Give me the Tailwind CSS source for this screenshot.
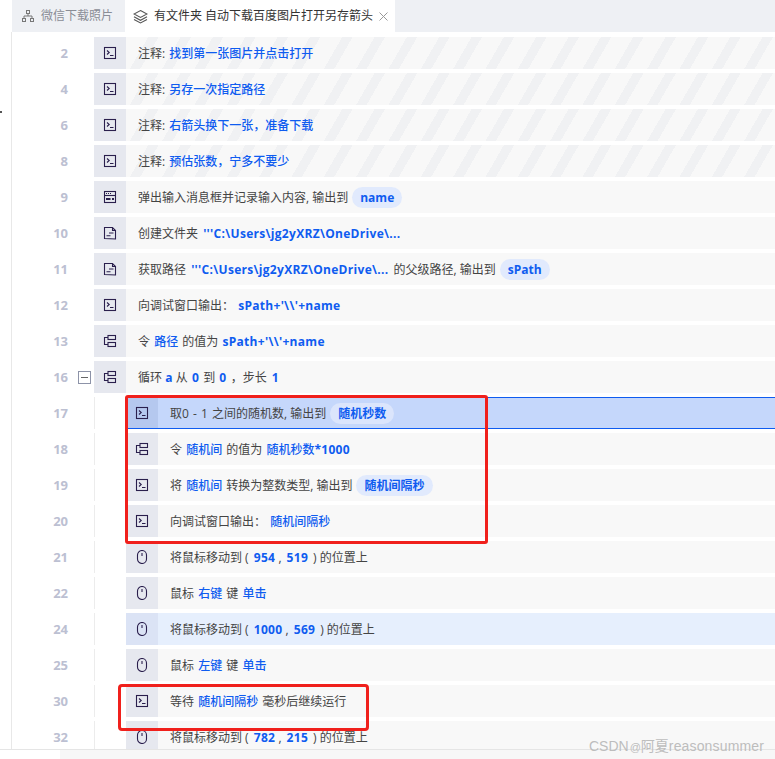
<!DOCTYPE html>
<html lang="zh">
<head>
    <meta charset="UTF-8">
    <title>流程编辑</title>
    <script src="https://cdn.jsdelivr.net/npm/@tailwindcss/browser@4"></script>
</head>
<body class="bg-white">
    <svg class="hidden">
        <symbol id="i-term" viewBox="0 0 14 14" fill="none" stroke="#2a1f4d" stroke-width="1.1"><rect x="1.5" y="1.5" width="11" height="11"/><path d="M4 4.5 6.2 6.5 4 8.5M7 9.5h3.5"/></symbol>
        <symbol id="i-input" viewBox="0 0 14 14" fill="none" stroke="#2a1f4d" stroke-width="1.1"><rect x="1.5" y="1.5" width="11" height="11"/><path d="M1.5 5.5h11"/><path d="M3 3.5h5" stroke-dasharray="1 1"/><path d="M3 9h4.5M9 9h2" stroke-width="1.8"/></symbol>
        <symbol id="i-file" viewBox="0 0 14 14" fill="none" stroke="#2a1f4d" stroke-width="1.1"><path d="M1.5 12.5v-11h8l3 3v8.5zM9.5 1.5v3h3M6 7h4.5M3.5 9.8h4"/></symbol>
        <symbol id="i-var" viewBox="0 0 14 14" fill="none" stroke="#2a1f4d" stroke-width="1.1"><rect x="5" y="1.5" width="7.5" height="4"/><rect x="5" y="8.5" width="7.5" height="4"/><path d="M5 3.5H1.5v7H5"/></symbol>
        <symbol id="i-mouse" viewBox="0 0 14 14" fill="none" stroke="#2a1f4d" stroke-width="1.1"><rect x="2.5" y=".5" width="9" height="13" rx="4.5"/><path d="M7 3v3"/></symbol>
    </svg>

    <div class="relative h-[759px] w-[775px] overflow-hidden font-['Open_Sans','Noto_Sans_CJK_SC',sans-serif] text-[12px] text-[#444]">
        <!-- tabs -->
        <div class="ml-3 flex h-8 bg-[#eef0f4]">
            <div class="flex w-[113px] items-center gap-[7px] pl-[10px] text-[#8a8d96]">
                <svg class="h-3 w-3" viewBox="0 0 12 12" fill="none" stroke="#777" stroke-width="1"><rect x="4.5" y=".5" width="3" height="3"/><rect x=".5" y="8.5" width="3" height="3"/><rect x="8.5" y="8.5" width="3" height="3"/><path d="M6 3.5V6M2 8.5V6h8v2.5"/></svg>
                <span>微信下载照片</span>
            </div>
            <div class="flex w-[270px] items-center bg-white pl-2 text-[#333]">
                <svg class="mr-[6px] h-[15px] w-[15px]" viewBox="0 0 15 15" fill="none" stroke="#555" stroke-width="1.1"><path d="M7.5 1.5 14 5 7.5 8.5 1 5zM1 7.8l6.5 3.5L14 7.8M1 10.5 7.5 14 14 10.5"/></svg>
                <span>有文件夹 自动下载百度图片打开另存箭头</span>
                <svg class="ml-[6px] h-[9px] w-[9px]" viewBox="0 0 9 9" stroke="#999" stroke-width="1"><path d="M.5.5l8 8M8.5.5l-8 8"/></svg>
            </div>
        </div>

        <!-- 流程行由脚本生成 -->
        <div id="rows" class="ml-[11px] flex h-[717px] flex-col gap-1 overflow-hidden border-l border-[#e8e8e8] pt-[5px]"></div>

        <!-- horizontal scrollbar -->
        <div class="h-[10px] border-t border-[#e5e5e5] pl-[60px]"><div class="h-full bg-[#f7f7f7]"></div></div>

        <!-- annotations drawn over the screenshot -->
        <div class="absolute left-[125px] top-[395px] h-[149px] w-[363px] rounded-[3px] border-[3px] border-[#f0201c]"></div>
        <div class="absolute left-[118px] top-[684px] h-[47px] w-[251px] rounded-[4px] border-[3px] border-[#f0201c]"></div>
        <span class="absolute left-[589px] top-[737px] font-['Liberation_Sans','Noto_Sans_CJK_SC',sans-serif] text-[14px] leading-[18px] text-[#bdbdbd]">CSDN<span class="ml-px text-[11px]">@</span>阿夏<span class="tracking-[.15px]">reasonsummer</span></span>
        <span class="absolute left-0 top-[111px] h-[2px] w-[2px] bg-[#555]"></span>
    </div>

    <script>
        // 蓝色参数：中文用 medium，数字和路径用 bold
        const cn = (t, c = 'mx-px') => `<b class="${c} font-medium text-[#0f5cf0]">${t}</b>`;
        const en = (t, c = '') => `<b class="${c} font-bold tracking-[.3px] text-[#0f5cf0]">${t}</b>`;
        const pill = (t, bg = 'bg-[#e1eafd]') => `<b class="ml-1 flex h-[21px] items-center rounded-full ${bg} px-2 pt-px font-bold text-[#0f5cf0]">${t}</b>`;
        const moveTo = (x, y) => `将鼠标移动到 ( ${en(x, 'ml-[2px]')} , ${en(y, 'ml-[2px]')}<span class="ml-[5px] mr-[3px]">)</span>的位置上`;
        const path = `'''C:\\Users\\jg2yXRZ\\OneDrive\\...`;

        const rows = [
            { n: 2, icon: 'term', kind: 'note', text: `注释: ${cn('找到第一张图片并点击打开', 'ml-px')}` },
            { n: 4, icon: 'term', kind: 'note', text: `注释: ${cn('另存一次指定路径', 'ml-px')}` },
            { n: 6, icon: 'term', kind: 'note', text: `注释: ${cn('右箭头换下一张，准备下载', 'ml-px')}` },
            { n: 8, icon: 'term', kind: 'note', text: `注释: ${cn('预估张数，宁多不要少', 'ml-px')}` },
            { n: 9, icon: 'input', text: '弹出输入消息框并记录输入内容, 输出到', after: pill('name') },
            { n: 10, icon: 'file', text: `创建文件夹 ${en(path, 'ml-[2px]')}` },
            { n: 11, icon: 'file', text: `获取路径 ${en(path, 'ml-[2px]')} <span class="ml-[2px]">的父级路径, 输出到</span>`, after: pill('sPath') },
            { n: 12, icon: 'term', text: `向调试窗口输出： ${en(`sPath+'\\\\'+name`, 'ml-px')}` },
            { n: 13, icon: 'var', text: `令 ${cn('路径')} 的值为 ${en(`sPath+'\\\\'+name`, 'ml-px')}` },
            { n: 16, icon: 'var', kind: 'loop', text: `循环 ${en('a')} 从 ${en('0', 'mx-px')} 到 ${en('0', 'mx-px')} ，步长 ${en('1', 'ml-[2px]')}` },
            { n: 17, icon: 'term', sub: true, kind: 'selected', text: '取0 <span class="mx-px">-</span> 1 <span class="ml-px">之间的随机数, 输出到</span>', after: pill('随机秒数', 'bg-[#dbe5fc]') },
            { n: 18, icon: 'var', sub: true, text: `令 ${cn('随机间')} 的值为 ${cn('随机秒数', 'ml-px')}${en('*1000')}` },
            { n: 19, icon: 'term', sub: true, text: `将 ${cn('随机间')} 转换为整数类型, 输出到`, after: pill('随机间隔秒') },
            { n: 20, icon: 'term', sub: true, text: `向调试窗口输出： ${cn('随机间隔秒', 'ml-px')}` },
            { n: 21, icon: 'mouse', sub: true, text: moveTo(954, 519) },
            { n: 22, icon: 'mouse', sub: true, text: `鼠标 ${cn('右键')} 键 ${cn('单击', 'ml-px')}` },
            { n: 24, icon: 'mouse', sub: true, kind: 'hover', text: moveTo(1000, 569) },
            { n: 25, icon: 'mouse', sub: true, text: `鼠标 ${cn('左键')} 键 ${cn('单击', 'ml-px')}` },
            { n: 30, icon: 'term', sub: true, text: `等待 ${cn('随机间隔秒')} 毫秒后继续运行` },
            { n: 32, icon: 'mouse', sub: true, text: moveTo(782, 215) },
        ];

        const bodyClass = {
            note: 'bg-[repeating-linear-gradient(120deg,#f8f8f8_0,#f8f8f8_19px,#f0f1f3_19px,#f0f1f3_28px)]',
            selected: 'border-y border-[#0f5cf0] bg-[#c5d7fb]',
            hover: 'bg-[#e6effd]',
        };
        const iconClass = { selected: 'h-[30px] bg-[#b5c8ef]', hover: 'h-8 bg-[#dbe3f5]' };

        document.getElementById('rows').innerHTML = rows.map(r => `
            <div class="flex h-8 shrink-0 items-center">
                <span class="w-14 pt-[2px] text-right text-[13px] font-bold text-[#bcc0d2]">${r.n}</span>
                ${r.kind === 'loop'
                    ? `<span class="ml-[10px] flex h-[13px] w-[13px] items-center justify-center border border-[#8d93a8]"><span class="h-px w-[7px] bg-[#666]"></span></span><span class="w-[3px]"></span>`
                    : `<span class="ml-[26px]"></span>`}
                ${r.sub ? `<span class="h-8 w-8 border-l border-[#ececec]"></span>` : ''}
                <div class="flex h-8 flex-1 items-center ${bodyClass[r.kind] || 'bg-[#f8f8f8]'}">
                    <span class="flex w-8 items-center justify-center ${iconClass[r.kind] || 'h-8 bg-[#e6e8ef]'}"><svg class="h-[14px] w-[14px]"><use href="#i-${r.icon}"/></svg></span>
                    <span class="ml-3 pt-[2px]">${r.text}</span>${r.after || ''}
                </div>
            </div>`).join('');
    </script>
</body>
</html>
